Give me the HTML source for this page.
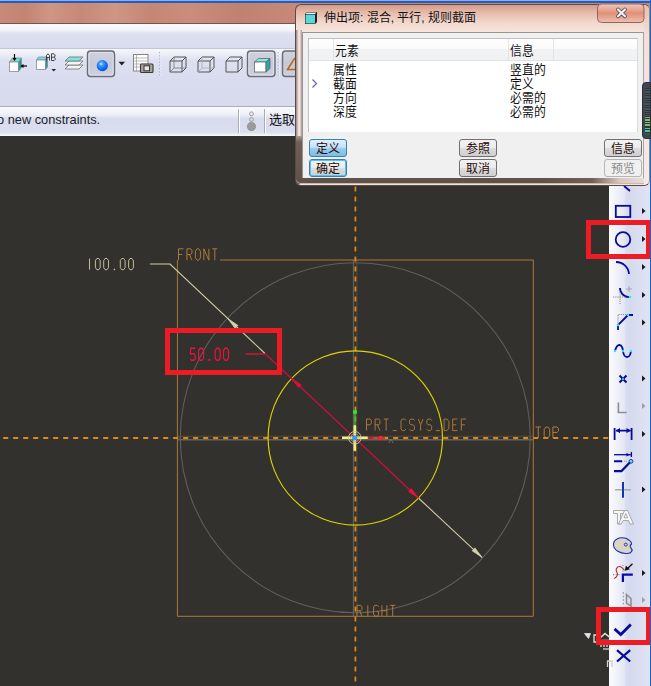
<!DOCTYPE html>
<html lang="zh-CN"><head><meta charset="utf-8">
<style>
*{margin:0;padding:0;box-sizing:border-box}
html,body{width:651px;height:686px;overflow:hidden;background:#33312d;font-family:"Liberation Sans",sans-serif}
.a{position:absolute}
#topline{left:0;top:0;width:651px;height:3px;background:#1f5ec8;border-top:1px solid #8fb0e0}
#title{left:0;top:3px;width:651px;height:21px;background:linear-gradient(90deg,#c88979 0px,#c48472 25px,#d09584 50px,#c78877 80px,#cf9685 115px,#c68674 150px,#cb8c7b 190px,#c18170 240px,#c88878 290px,#c58573 651px);border-bottom:1px solid #6e5850}
#band{left:0;top:24px;width:651px;height:25px;background:linear-gradient(#fbfbfd 0px,#f4f5fa 6px,#e2e4f2 9px,#dcdff0 12px,#d9dcee 25px)}
#tb{left:0;top:48px;width:651px;height:59px;background:linear-gradient(#f6f7fb 0px,#eceef7 5px,#dee1f1 11px,#d9dcef 30px,#d8dbee 100%);border-top:1px solid #c2c5d2;border-bottom:1.5px solid #a9acba}
#sb{left:0;top:107px;width:651px;height:29px;background:linear-gradient(#fbfbfd 0px,#f6f7fb 3px,#eceef7 8px,#dfe3f1 10px,#d8dcee 12px,#dadeef 25px,#e6e8f0 26.5px,#f6f6f8 28.5px,#8a8a88 29px)}
#sbtext{left:-3px;top:111.5px;font-size:12.8px;color:#1e1e28;font-family:"Liberation Sans",sans-serif}
#rtb{left:609px;top:136px;width:42px;height:550px;background:linear-gradient(90deg,#fbfbfe 0px,#f3f4fa 6px,#e5e8f5 15px,#d9ddf0 17px,#d5daee 21px,#dbdff1 32px,#dfe3f3 40px);border-right:1.5px solid #1a64d0}
#dlg{left:295px;top:4px;width:355px;height:181.5px;border-radius:6px;background:linear-gradient(#d49a88 0px,#e6bcac 8px,#f3d9ce 18px,#f7e6de 28px,#f2e8e4 60px,#efe6e2 100%);border:1px solid #5f4a42;border-right-color:#9a8a84}
#dlgl{left:296px;top:136px;width:6px;height:48px;background:linear-gradient(#a89a94 0px,#6e6058 6px,#5e524a 100%)}
#dlgb{left:296px;top:178px;width:348px;height:6px;background:linear-gradient(90deg,#5e524a 0%,#5e524a 70%,#6e6058 85%,#d8c8c0 93%,#e8dcd6 100%);border-bottom:1px solid #c8b8b0;border-radius:0 0 0 5px}
#dlgr{left:644px;top:4.5px;width:5px;height:180px;background:linear-gradient(#e8c0b0 0px,#f4e0d8 30px,#f4ebe8 100%);border-radius:0 6px 6px 0}
#inner{left:302px;top:32px;width:342px;height:146px;background:#f0f0f0;border-top:1px solid #9a9490;border-left:1px solid #9a9490;border-right:1px solid #a8a4a2}
#tbl{left:308px;top:38px;width:330px;height:94px;background:#fff;border-top:1px solid #c0c0c0;border-left:1px solid #c0c0c0;border-right:1px solid #dcdcdc}
#hdr{left:309px;top:39px;width:328px;height:22px;background:linear-gradient(#ffffff 0%,#fbfbfc 45%,#f1f2f4 50%,#f1f2f4 100%);border-bottom:1px solid #e2e2e6}
.btn{position:absolute;height:18px;width:38px;border:1px solid #707070;border-radius:3px;background:linear-gradient(#f2f2f2 0%,#ebebeb 50%,#dddddd 51%,#cfcfcf 100%);font-size:12px;color:#2a0a0a;text-align:center;line-height:18.5px}
.cj{font-size:13px;color:#111;line-height:13.83px;position:absolute;transform:scaleX(0.91);transform-origin:0 0}
.rb{position:absolute;border:5px solid #ed1c24}
svg{position:absolute;left:0;top:0}
</style></head><body>
<div class="a" id="topline"></div>
<div class="a" id="title"></div>
<div class="a" id="band"></div>
<div class="a" id="tb"></div>
<div class="a" id="sb"></div>
<div class="a" id="sbtext">o new constraints.</div>
<div class="a" style="left:238px;top:109px;width:2px;height:24px;border-left:1px solid #a8abb8;border-right:1px solid #fff"></div>
<div class="a" style="left:264px;top:109px;width:2px;height:24px;border-left:1px solid #a8abb8;border-right:1px solid #fff"></div>
<div class="a" style="left:269px;top:109px;font-size:13px;color:#111">选取</div>
<div class="a" id="rtb"></div>

<!-- top toolbar icons -->
<svg width="651" height="140" viewBox="0 0 651 140">
 <!-- icon1 cube with arrows -->
 <path d="M9.5,62 L12.5,58 H21.5 L18.5,62Z" fill="#6ee0e0" stroke="#8a8a8a" stroke-width="0.8"/>
 <rect x="9.5" y="62" width="9" height="9.5" fill="#fff" stroke="#8a8a8a" stroke-width="0.8"/>
 <path d="M18.5,62 L21.5,58 V67.5 L18.5,71.5Z" fill="#1aa0a0" stroke="#8a8a8a" stroke-width="0.8"/>
 <path d="M14.5,54 V60" stroke="#000" stroke-width="1.2"/><path d="M12.5,58 L14.5,61 L16.5,58Z" fill="#000"/>
 <path d="M21,66 H27" stroke="#000" stroke-width="1.2"/><path d="M23.5,64 L20.5,66 L23.5,68Z" fill="#000"/>
 <!-- icon2 cube AB -->
 <path d="M36.5,60 L38.5,57 H47 L45,60Z" fill="#6ee0e0" stroke="#8a8a8a" stroke-width="0.8"/>
 <rect x="36.5" y="60" width="9" height="9.5" fill="#fff" stroke="#8a8a8a" stroke-width="0.8"/>
 <path d="M45.5,60 L47.5,57.5 V67 L45.5,69.5Z" fill="#1aa0a0" stroke="#8a8a8a" stroke-width="0.8"/>
 <path d="M46.5,60.5 V55.5 L48,53.8 L49.5,55.5 V60.5 M46.5,57.5 H49.5 M51.5,60.5 V53.8 H54 L55,54.8 V56.5 L54,57.2 H51.5 M54,57.2 L55.2,58.2 V59.5 L54.2,60.5 H51.5" fill="none" stroke="#333" stroke-width="0.9"/>
 <path d="M51.5,69 H56 L53.75,71.5Z" fill="#222"/>
 <!-- icon3 layers -->
 <path d="M65,69 L69,65 H83 L79,69Z" fill="#f4f4f4" stroke="#7a7a7a" stroke-width="0.9"/>
 <path d="M65,65 L69,61 H83 L79,65Z" fill="#f4f4f4" stroke="#7a7a7a" stroke-width="0.9"/>
 <path d="M65,61 L69,57 H83 L79,61Z" fill="#80e4e4" stroke="#7a7a7a" stroke-width="0.9"/>
 <!-- pressed button blue sphere -->
 <rect x="87.5" y="51" width="27" height="25.5" rx="3" fill="url(#pb)" stroke="#696c76" stroke-width="1.4"/>
 <defs><linearGradient id="pb" x1="0" y1="0" x2="0" y2="1"><stop offset="0" stop-color="#d0d2de"/><stop offset="0.5" stop-color="#c6c9d8"/><stop offset="1" stop-color="#cdd0de"/></linearGradient></defs>
 <rect x="89" y="52.5" width="24" height="22.5" rx="2" fill="none" stroke="#dfe1ea" stroke-width="1"/>
 <defs><radialGradient id="bs" cx="0.4" cy="0.35" r="0.7"><stop offset="0" stop-color="#e0f0ff"/><stop offset="0.25" stop-color="#3a9cff"/><stop offset="0.7" stop-color="#0a6af0"/><stop offset="1" stop-color="#0848b8"/></radialGradient></defs>
 <circle cx="102.3" cy="65.6" r="5.6" fill="url(#bs)"/>
 <path d="M118.5,61.8 H125 L121.75,65.5Z" fill="#222"/>
 <!-- table with camera -->
 <rect x="133.5" y="54.5" width="14.5" height="16.5" fill="#fff" stroke="#7a7a7a" stroke-width="0.9"/>
 <path d="M136.5,54.5 V71 M133.5,58 H148 M133.5,61 H148 M133.5,64 H148 M133.5,67 H148" stroke="#9a9a9a" stroke-width="0.7"/>
 <rect x="140.5" y="64" width="12.5" height="8.5" rx="1" fill="#a8a494" stroke="#3a3a36" stroke-width="1.1"/>
 <rect x="144" y="65.8" width="5.5" height="5" fill="#e8e8e0" stroke="#333" stroke-width="1"/>
 <!-- separators -->
 <path d="M159.7,52 V77" stroke="#a9acb8" stroke-width="1.2" stroke-dasharray="1.2,2"/>
 <path d="M160.7,52 V77" stroke="#fff" stroke-width="0.8" stroke-dasharray="1.2,2"/>
 <path d="M278.3,52 V77" stroke="#a9acb8" stroke-width="1.2" stroke-dasharray="1.2,2"/>
 <path d="M279.3,52 V77" stroke="#fff" stroke-width="0.8" stroke-dasharray="1.2,2"/>
 <!-- wireframe cubes -->
 <g fill="none" stroke="#555" stroke-width="1">
  <path d="M170,61 H182 V72 H170Z M170,61 L174,57 H186 L182,61 M186,57 V68 L182,72"/>
  <path d="M174,57 V68 H186 M174,68 L170,72" stroke="#777" stroke-width="0.8"/>
  <path d="M198,61 H210 V72 H198Z M198,61 L202,57 H214 L210,61 M214,57 V68 L210,72"/>
  <path d="M202,57 V68 H214 M202,68 L198,72" stroke="#aaa" stroke-width="0.8"/>
  <path d="M226,61 H238 V72 H226Z M226,61 L230,57 H242 L238,61 M242,57 V68 L238,72"/>
 </g>
 <!-- pressed shaded cube -->
 <rect x="247.5" y="51" width="27.5" height="25.5" rx="3" fill="url(#pb)" stroke="#696c76" stroke-width="1.4"/>
 <rect x="249" y="52.5" width="24.5" height="22.5" rx="2" fill="none" stroke="#dfe1ea" stroke-width="1"/>
 <path d="M254.5,62 L258.5,58.5 H270 L266,62Z" fill="#7ee8ee" stroke="#666" stroke-width="0.8"/>
 <rect x="254.5" y="62" width="11.5" height="10" fill="#fff" stroke="#666" stroke-width="0.8"/>
 <path d="M266,62 L270,58.5 V68.5 L266,72Z" fill="#2aa8a8" stroke="#666" stroke-width="0.8"/>
 <!-- next pressed button partial -->
 <rect x="282.5" y="51" width="27" height="25.5" rx="3" fill="url(#pb)" stroke="#696c76" stroke-width="1.4"/>
 <path d="M300,69.5 H287.5 L294.5,58.5 H305" fill="none" stroke="#b86a20" stroke-width="1.6"/>
 <!-- status icon -->
 <circle cx="251.5" cy="113.8" r="1.9" fill="none" stroke="#9a9a9a" stroke-width="1"/>
 <circle cx="251.5" cy="119.5" r="1.9" fill="none" stroke="#9a9a9a" stroke-width="1"/>
 <circle cx="251.5" cy="126.5" r="4.2" fill="#9a9a9a" stroke="#888" stroke-width="0.6"/>
</svg>

<!-- canvas drawing -->
<svg width="609" height="686" viewBox="0 0 609 686" style="clip-path:inset(136px 0 0 0)">
 <!-- gray datum edges -->
 <path d="M353.5,260 V616" stroke="#626260" stroke-width="1.2" fill="none"/>
 <path d="M178,439.7 H533" stroke="#626260" stroke-width="1.4" fill="none"/>
 <path d="M178,436.3 H533" stroke="#5e4a30" stroke-width="1" fill="none"/>
 <path d="M356.8,260 V616" stroke="#5e4a30" stroke-width="1" fill="none"/>
 <!-- gray big circle -->
 <circle cx="355.3" cy="437.8" r="175" fill="none" stroke="#5f5f5c" stroke-width="1.05"/>
 <!-- FRONT rectangle -->
 <path d="M220,260 H533.3 V616.3 H177.4 V260" fill="none" stroke="#ad7838" stroke-width="1"/>
 <!-- dashed references -->
 <path d="M355.4,136 V686" stroke="#de8a1a" stroke-width="1.7" stroke-dasharray="5,5" stroke-dashoffset="-0.5" fill="none"/>
 <path d="M0,438 H609" stroke="#de8a1a" stroke-width="2" stroke-dasharray="5,5" stroke-dashoffset="-3.2" fill="none"/>
 <!-- yellow circle -->
 <circle cx="355.3" cy="438" r="87.2" fill="none" stroke="#dcd400" stroke-width="1.15"/>
 <!-- beige dimension 100 -->
 <path d="M150,264 H170 L265,353.5 M418.4,498 L482,557.3" fill="none" stroke="#cfcfa8" stroke-width="1.05"/>
 <path d="M228,318.8 L235.1,328.2 L237.9,325.4Z" fill="#d2d2aa" stroke="#d2d2aa" stroke-width="0.8"/>
 <path d="M482,557.3 L472.1,550.7 L474.9,547.9Z" fill="#d2d2aa" stroke="#d2d2aa" stroke-width="0.8"/>
 <!-- red dimension 50 -->
 <path d="M245.5,354 H265.5" fill="none" stroke="#e0103a" stroke-width="1.4"/><path d="M265.5,354 L418.4,498" fill="none" stroke="#cc103a" stroke-width="1.2"/>
 <path d="M291.5,378.4 L298.6,387.8 L301.4,385Z" fill="#d8103a" stroke="#d8103a" stroke-width="0.8"/>
 <path d="M418.4,498 L408.5,491.4 L411.3,488.6Z" fill="#e8103a" stroke="#e8103a" stroke-width="0.8"/>
 <!-- csys -->
 <path d="M355,412 V426" stroke="#30c030" stroke-width="1.5"/>
 <circle cx="355" cy="412" r="2.2" fill="#30e030"/>
 <path d="M366,438 H385" stroke="#e02030" stroke-width="1.5"/>
 <circle cx="380.6" cy="438" r="2.2" fill="#ff2030"/>
 <path d="M342,437.8 H367.7 M354.8,425.3 V450.7" stroke="#f6f080" stroke-width="2.6"/>
 <circle cx="354.8" cy="437.8" r="6.3" fill="none" stroke="#c8c8a0" stroke-width="1"/>
 <circle cx="354.8" cy="437.8" r="4.2" fill="none" stroke="#a8a890" stroke-width="0.8"/>
 <circle cx="354.8" cy="437.8" r="2.6" fill="#2aa0e8"/>
 <path d="M389,443 L391,439 L393,443" stroke="#777" stroke-width="0.8" fill="none"/>
 <g fill="none" stroke="#b8823c" stroke-width="1.00" stroke-linejoin="round"><path transform="translate(178.50,248.80) scale(0.833,0.950)" d="M6,0H0V12M0,6H4.5"/><path transform="translate(186.95,248.80) scale(0.833,0.950)" d="M0,12V0H4.5L6,1.5V4.5L4.5,6H0M3,6L6,12"/><path transform="translate(195.40,248.80) scale(0.833,0.950)" d="M2,0H4L6,2.5V9.5L4,12H2L0,9.5V2.5Z"/><path transform="translate(203.85,248.80) scale(0.833,0.950)" d="M0,12V0L6,12V0"/><path transform="translate(212.30,248.80) scale(0.833,0.950)" d="M0,0H6M3,0V12"/></g>
<g fill="none" stroke="#b8823c" stroke-width="1.04" stroke-linejoin="round"><path transform="translate(535.50,427.00) scale(0.917,0.908)" d="M0,0H6M3,0V12"/><path transform="translate(544.20,427.00) scale(0.917,0.908)" d="M2,0H4L6,2.5V9.5L4,12H2L0,9.5V2.5Z"/><path transform="translate(552.90,427.00) scale(0.917,0.908)" d="M0,12V0H4.5L6,1.5V4.5L4.5,6H0"/></g>
<g fill="none" stroke="#b8823c" stroke-width="1.05" stroke-linejoin="round"><path transform="translate(357.00,605.30) scale(0.833,0.908)" d="M0,12V0H4.5L6,1.5V4.5L4.5,6H0M3,6L6,12"/><path transform="translate(365.30,605.30) scale(0.833,0.908)" d="M3,0V12"/><path transform="translate(373.60,605.30) scale(0.833,0.908)" d="M6,1.5L4.5,0H1.5L0,2V10L1.5,12H4.5L6,10.5V7H3.5"/><path transform="translate(381.90,605.30) scale(0.833,0.908)" d="M0,0V12M6,0V12M0,6H6"/><path transform="translate(390.20,605.30) scale(0.833,0.908)" d="M0,0H6M3,0V12"/></g>
<g fill="none" stroke="#b8823c" stroke-width="0.98" stroke-linejoin="round"><path transform="translate(366.50,419.00) scale(0.800,0.967)" d="M0,12V0H4.5L6,1.5V4.5L4.5,6H0"/><path transform="translate(375.12,419.00) scale(0.800,0.967)" d="M0,12V0H4.5L6,1.5V4.5L4.5,6H0M3,6L6,12"/><path transform="translate(383.74,419.00) scale(0.800,0.967)" d="M0,0H6M3,0V12"/><path transform="translate(392.36,419.00) scale(0.800,0.967)" d="M0.5,12H5.5"/><path transform="translate(400.98,419.00) scale(0.800,0.967)" d="M6,1.5L4.5,0H1.5L0,2V10L1.5,12H4.5L6,10.5"/><path transform="translate(409.60,419.00) scale(0.800,0.967)" d="M6,1.5L4.5,0H1.5L0,1.5V4.5L1.5,6H4.5L6,7.5V10.5L4.5,12H1.5L0,10.5"/><path transform="translate(418.22,419.00) scale(0.800,0.967)" d="M0,0L3,6L6,0M3,6V12"/><path transform="translate(426.84,419.00) scale(0.800,0.967)" d="M6,1.5L4.5,0H1.5L0,1.5V4.5L1.5,6H4.5L6,7.5V10.5L4.5,12H1.5L0,10.5"/><path transform="translate(435.46,419.00) scale(0.800,0.967)" d="M0.5,12H5.5"/><path transform="translate(444.08,419.00) scale(0.800,0.967)" d="M0,0V12H3.5L6,9.5V2.5L3.5,0Z"/><path transform="translate(452.70,419.00) scale(0.800,0.967)" d="M6,0H0V12H6M0,6H4.5"/><path transform="translate(461.32,419.00) scale(0.800,0.967)" d="M6,0H0V12M0,6H4.5"/></g>
<g fill="none" stroke="#d2d2aa" stroke-width="1.02" stroke-linejoin="round"><path transform="translate(87.10,258.50) scale(0.800,0.933)" d="M3,0V12"/><path transform="translate(95.40,258.50) scale(0.800,0.933)" d="M1.8,0H4.2L6,2.2V9.8L4.2,12H1.8L0,9.8V2.2Z"/><path transform="translate(103.70,258.50) scale(0.800,0.933)" d="M1.8,0H4.2L6,2.2V9.8L4.2,12H1.8L0,9.8V2.2Z"/><path transform="translate(112.00,258.50) scale(0.800,0.933)" d="M2.6,11.2H3.4V12H2.6Z"/><path transform="translate(120.30,258.50) scale(0.800,0.933)" d="M1.8,0H4.2L6,2.2V9.8L4.2,12H1.8L0,9.8V2.2Z"/><path transform="translate(128.60,258.50) scale(0.800,0.933)" d="M1.8,0H4.2L6,2.2V9.8L4.2,12H1.8L0,9.8V2.2Z"/></g>
<g fill="none" stroke="#e8123e" stroke-width="1.45" stroke-linejoin="round"><path transform="translate(190.30,348.30) scale(0.833,1.000)" d="M6,0H0.5L0,5.5H4.5L6,7V10.5L4.5,12H1.5L0,10.5"/><path transform="translate(198.60,348.30) scale(0.833,1.000)" d="M1.8,0H4.2L6,2.2V9.8L4.2,12H1.8L0,9.8V2.2Z"/><path transform="translate(206.90,348.30) scale(0.833,1.000)" d="M2.6,11.2H3.4V12H2.6Z"/><path transform="translate(215.20,348.30) scale(0.833,1.000)" d="M1.8,0H4.2L6,2.2V9.8L4.2,12H1.8L0,9.8V2.2Z"/><path transform="translate(223.50,348.30) scale(0.833,1.000)" d="M1.8,0H4.2L6,2.2V9.8L4.2,12H1.8L0,9.8V2.2Z"/></g>
</svg>

<!-- right toolbar icons -->
<svg width="651" height="686" viewBox="0 0 651 686">
 <g fill="#1a1a1a">
  <path d="M642,208 L645.5,211 L642,214Z"/>
  <path d="M642,236 L645.5,239 L642,242Z"/>
  <path d="M642,264 L645.5,267 L642,270Z"/>
  <path d="M642,292 L645.5,295 L642,298Z"/>
  <path d="M642,319.5 L645.5,322.5 L642,325.5Z"/>
  <path d="M642,375.5 L645.5,378.5 L642,381.5Z"/>
  <path d="M642,431 L645.5,434 L642,437Z"/>
  <path d="M642,486.5 L645.5,489.5 L642,492.5Z"/>
  <path d="M642,570 L645.5,573 L642,576Z"/>
 </g>
 <g fill="#a0a0a0">
  <path d="M642,403 L645.5,406 L642,409Z"/>
  <path d="M642,597 L645.5,600 L642,603Z"/>
 </g>
 <g fill="none" stroke="#0a0a9a" stroke-width="1.8">
  <path d="M624,186 L630,191"/>
  <rect x="615.8" y="205.8" width="14.5" height="11.2"/>
  <circle cx="623" cy="239.5" r="7.3"/>
  <path d="M616,262 A13,13 0 0 1 629,274"/>
  <path d="M620,288 A9,9 0 0 0 630,297"/>
  <path d="M618,330 V325 L628,315 H633"/>
  <path d="M615,351 C617,343 622,343 623,351 C624,359 630,359 631,351"/>
  <path d="M619.5,375.5 L626.5,382.5 M626.5,375.5 L619.5,382.5" stroke-width="2"/>
  <path d="M614.6,428 V440 M631.6,428 V440 M616,430.6 H630.5"/>
  <path d="M623,482 V497.5"/>
  <path d="M614,461.3 H622 M614,471.1 H621.5 L631,461.3" stroke-width="2.1"/><path d="M614,454.7 H631" stroke-width="1.3"/>
 </g>
 <path d="M616,430.6 L620,428 V433.2Z M630.5,430.6 L626.5,428 V433.2Z" fill="#0a0a9a"/>
 <path d="M631.4,452 V457" stroke="#0a0a9a" stroke-width="1.3"/><path d="M626.5,452.8 L629.5,454.7 L626.5,456.6Z" fill="#0a0a9a"/>
 <circle cx="631" cy="461.3" r="1.9" fill="#50e8ff" stroke="#0a0a9a" stroke-width="0.8"/>
 <path d="M622,461.3 H629" stroke="#a8a8a0" stroke-width="1.2" stroke-dasharray="1,1"/>
 <g fill="#30e8f0">
  <circle cx="630" cy="297" r="1.3"/>
  <circle cx="618" cy="325" r="1.3"/><circle cx="628" cy="315" r="1.3"/>
  <circle cx="615" cy="351" r="1.2"/><circle cx="623" cy="351" r="1.2"/><circle cx="631" cy="351" r="1.2"/>
  <circle cx="623" cy="379" r="1.1"/>
 </g>
 <g fill="none" stroke="#8a8a8a" stroke-width="1" stroke-dasharray="1.2,1">
  <path d="M613,297 H626 M620,292 V304"/>
  <path d="M618,325 V314.5 H628"/>
 </g>
 <path d="M626,289 H632 M629,286 V292" stroke="#999" stroke-width="0.8"/>
 <path d="M618.4,402.6 V412.5 H626.6" stroke="#8e8e8e" stroke-width="1.6" fill="none"/>
 <path d="M615,489.8 H631" stroke="#a0a0a0" stroke-width="1.3"/>
 <path d="M623,482 V497.5" stroke="#0a3ab0" stroke-width="1.8"/>
 <g fill="#f6f6f8" stroke="#a0a0a0" stroke-width="0.9"><path d="M613.5,510.5 H625 V513.5 H620.5 V524 H617.5 V513.5 H613.5Z"/><path d="M618.5,524 L624.5,510.5 H627.5 L633.5,524 H630 L628.5,520.5 H623 L621.5,524Z"/><path d="M624,517.8 H627.6 L625.8,513.6Z"/></g>
 <path d="M617,539 C620,537 626,537.5 628,539.5 C630,541 632,541.5 631.5,544 C630,545.5 629.5,546 631,548 C633,550 632,553.5 627,553.5 C620,554 614,550 613.5,545 C613.3,542 615,540 617,539Z" fill="#d8d4c6" stroke="#1a2ab0" stroke-width="1.1"/>
 <circle cx="625.8" cy="544.6" r="1.5" fill="none" stroke="#1a2ab0" stroke-width="0.9"/>
 <path d="M614.3,578.4 C617.5,577 618,574 616.8,572 C615.5,570 616,567 619.5,566.5 C622,566.2 622.5,569 624.5,570.2" stroke="#b82818" stroke-width="1.1" fill="none"/>
 
 <path d="M622.9,582 V574.6 H632.8" stroke="#0a0ab0" stroke-width="2.3" fill="none"/><path d="M613,574.6 H621 M622.9,565 V573" stroke="#8a8a8a" stroke-width="1.1" stroke-dasharray="1.1,1.6" fill="none"/>
 <path d="M632.5,563.7 L627,569" stroke="#111" stroke-width="1.3"/><path d="M624.8,570.8 L625.8,565.8 L630,569.2Z" fill="#111"/>
 <path d="M623.3,592 V606" stroke="#a0a0a0" stroke-width="1.1" stroke-dasharray="2,1.5"/>
 <path d="M626.5,594.5 L631,598.5 V606 L626.5,603Z" fill="none" stroke="#8e8e8e" stroke-width="1.5"/>
 <path d="M614.5,628.9 L620.8,634.5 L630.8,624.5" stroke="#0a0a9a" stroke-width="2.8" fill="none"/>
 <path d="M617,650.2 L630.2,661.5 M630.2,650.2 L617,661.5" stroke="#0a0a9a" stroke-width="2.2" fill="none"/>
</svg>

<!-- watermark fragments -->
<svg width="651" height="686" viewBox="0 0 651 686">
 <g fill="none" stroke="#e4e4e4" stroke-width="1.5">
  <path d="M584.5,633.5 H590.5 L588.5,638.5Z" fill="#e4e4e4" stroke-width="0.8"/>
  <path d="M594,635 V642 H598 V635Z" stroke-width="1.3"/>
  <path d="M600,638 L605,633.5 L610.5,638 M601.5,640.5 H611"/>
  <path d="M601,643 V647 M604,643 V647 M607,643 V647 M610,643 V647" stroke-width="1.3"/>
  <path d="M603,649 H611" stroke-width="1.2"/>
  <path d="M607.5,667 V661 H612 V667" stroke-width="1.3" stroke="#cfcfcf"/>
 </g>
</svg>
<!-- red annotation boxes -->
<div class="rb" style="left:165px;top:328px;width:117px;height:47px"></div>
<div class="rb" style="left:586px;top:220px;width:65px;height:38.5px"></div>
<div class="rb" style="left:596px;top:607px;width:55px;height:38px"></div>

<!-- dialog -->
<div class="a" id="dlg"></div>
<div class="a" style="left:296px;top:30px;width:6px;height:106px;background:linear-gradient(90deg,#8e7e78 0px,#bcaea8 1px,#eadcd6 2.5px,#f2e6e2 3.5px,#c8bcb8 5px,#9a9090 6px)"></div>
<div class="a" id="dlgl"></div>
<div class="a" id="dlgr"></div>
<div class="a" id="dlgb"></div>
<div class="a" id="inner"></div>
<div class="a" id="tbl"></div>
<div class="a" id="hdr"></div>
<div class="a" style="left:333px;top:39px;width:1px;height:22px;background:#e4e4e8"></div>
<div class="a" style="left:508px;top:39px;width:1px;height:22px;background:#e4e4e8"></div>
<div class="a" style="left:553px;top:39px;width:1px;height:22px;background:#e4e4e8"></div>
<svg width="651" height="200" viewBox="0 0 651 200">
 <path d="M305,14 L307,12 H317 V22 L315,24 H305Z" fill="#111"/>
 <path d="M305.5,14.5 H315 V23.5 H305.5Z" fill="#5ad8d8"/>
 <path d="M305.5,14 L307,12.5 H316.5 L315,14Z" fill="#f0f0f0"/>
 <path d="M315.5,14.5 L316.5,13 V22 L315.5,23.5Z" fill="#333"/>
 <rect x="597.5" y="4" width="46.5" height="18.5" rx="4" fill="url(#cbg)" stroke="#8a6a60" stroke-width="1"/>
 <defs><linearGradient id="cbg" x1="0" y1="0" x2="0" y2="1"><stop offset="0" stop-color="#f4c8b8"/><stop offset="0.5" stop-color="#e09078"/><stop offset="1" stop-color="#f0c0b0"/></linearGradient></defs>
 <path d="M618,9.5 L625,16.3 M625,9.5 L618,16.3" stroke="#4a4a50" stroke-width="3.8" stroke-linecap="round"/>
 <path d="M618,9.5 L625,16.3 M625,9.5 L618,16.3" stroke="#f4f4f4" stroke-width="2.2" stroke-linecap="round"/>
 <path d="M312.5,79.5 L316.5,83.5 L312.5,87.5" fill="none" stroke="#6a5aa8" stroke-width="1.1"/>
</svg>
<div class="a" style="left:324px;top:8px;font-size:12px;color:#111">伸出项: 混合, 平行, 规则截面</div>
<div class="btn" style="left:309px;top:139px;background:linear-gradient(#dff0fb 0%,#bfe0f5 50%,#9ccdee 51%,#7fbbe4 100%);border-color:#3c7fb1">定义</div>
<div class="btn" style="left:309px;top:159px;border-color:#3c7fb1;box-shadow:inset 0 0 0 1px #48c8f8">确定</div>
<div class="btn" style="left:459px;top:139px">参照</div>
<div class="btn" style="left:459px;top:159px">取消</div>
<div class="btn" style="left:604px;top:139px">信息</div>
<div class="btn" style="left:604px;top:159px;color:#8a8a8a;border-color:#b5b5b5;background:#f0f0f0">预览</div>

<div class="cj" style="left:334.5px;top:44px">元素</div>
<div class="cj" style="left:509.5px;top:44px">信息</div>
<div class="cj" style="left:333px;top:63px;line-height:14.1px">属性<br>截面<br>方向<br>深度</div>
<div class="cj" style="left:509.5px;top:63px;line-height:14.1px">竖直的<br>定义<br>必需的<br>必需的</div>
<div class="a" style="left:649.6px;top:0;width:1.4px;height:686px;background:#1a64d0"></div>
<!-- dark widget -->
<div class="a" style="left:642px;top:82px;width:9px;height:57px;background:#3e4650;border-radius:4px 0 0 4px;border:1px solid #2a3038"></div>
<div class="a" style="left:645px;top:88px;width:5px;height:46px;background:repeating-linear-gradient(#2e343c 0 1px,#48525c 1px 2.4px)"></div>
<div class="a" style="left:645px;top:116px;width:5px;height:17px;background:repeating-linear-gradient(#2e343c 0 1px,#7cc060 1px 2.4px)"></div>
<div class="a" style="left:645px;top:127px;width:5px;height:6px;background:repeating-linear-gradient(#2e343c 0 1px,#40c8a0 1px 2.4px)"></div>
</body></html>
